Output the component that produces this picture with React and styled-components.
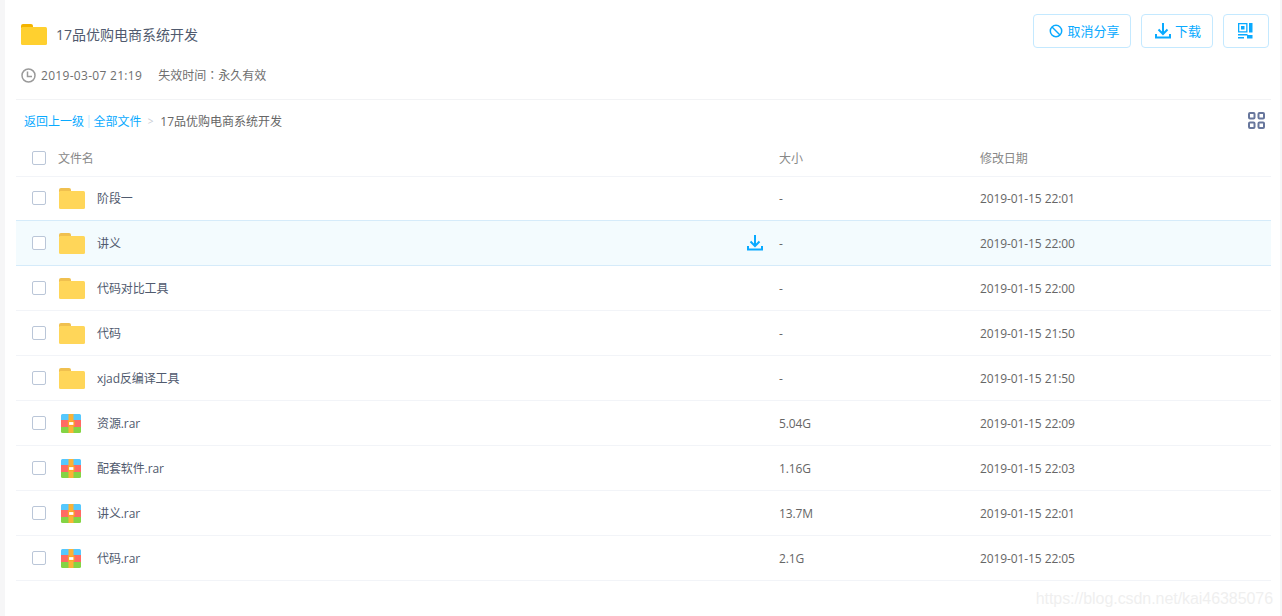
import React from "react";
import styled, { createGlobalStyle } from "styled-components";

const GlobalStyle = createGlobalStyle`
    html, body {
        margin: 0;
        height: 100%;
        background: #f6f6f7;
        overflow: hidden;
    }
    body {
        font-family: "Open Sans", "Noto Sans CJK SC", sans-serif;
        font-size: 12px;
        color: #666;
    }
`

const Page = styled.div`
    position: relative;
    margin: 0 2px 0 5px;
    height: 616px;
    background: #fff;
    padding: 0 9px 0 11px;
    box-sizing: border-box;
`
const Header = styled.header`
    display: flex;
    justify-content: space-between;
    height: 100px;
    border-bottom: 1px solid #f2f3f5;
    padding-top: 14px;
    box-sizing: border-box;
`
const TitleBlock = styled.div`
    padding-left: 5px;
`
const TitleRow = styled.div`
    display: flex;
    align-items: center;
    gap: 9px;
    height: 40px;
`
const Title = styled.h1`
    margin: 0;
    font-size: 14px;
    font-weight: 400;
    color: #505a6e;
`
const MetaRow = styled.div`
    display: flex;
    align-items: center;
    gap: 16px;
    margin-top: 11px;
    height: 20px;
    color: #6f6f6f;
`
const MetaTime = styled.span`
    display: flex;
    align-items: center;
    gap: 5px;
    letter-spacing: 0.3px;
`
const MetaExpiry = styled.span`
    font-family: "Open Sans", "Noto Sans CJK TC", sans-serif;
`
const Actions = styled.div`
    display: flex;
    gap: 10px;
    margin-right: 2px;
`
const ActionButton = styled.button`
    display: flex;
    align-items: center;
    justify-content: center;
    gap: ${props => props.$gap || 5}px;
    width: ${props => props.$width}px;
    height: 34px;
    padding: 0 0 0 ${props => props.$inset || 0}px;
    background: #fff;
    border: 1px solid #c4e9ff;
    border-radius: 4px;
    color: #09aaff;
    font: inherit;
    font-size: 13px;
`
const ButtonLabel = styled.span`
    margin-bottom: 2px;
`
const CrumbBar = styled.nav`
    display: flex;
    align-items: center;
    height: 40px;
    box-sizing: border-box;
    padding: 1px 6px 0 8px;
    color: #666;
`
const CrumbLink = styled.a`
    color: #09aaff;
`
const CrumbDivider = styled.span`
    color: #c4e9ff;
    margin: 0 1.500px;
`
const CrumbArrow = styled.span`
    color: #c8ccd4;
    margin: 0 7px 0 6px;
    font-size: 10px;
`
const GridToggle = styled.span`
    display: flex;
    margin-left: auto;
`
const Row = styled.div`
    display: grid;
    grid-template-columns: 27px 38px 682px 201px 1fr;
    align-items: center;
    height: ${props => props.$head ? "37px" : props.$active ? "46px" : "45px"};
    box-sizing: border-box;
    padding-left: 16px;
    border-bottom: 1px solid ${props => props.$active ? "#d5ebfa" : "#f2f4f8"};
    border-top: ${props => props.$active ? "1px solid #d5ebfa" : "none"};
    background: ${props => props.$active ? "#f3fbfe" : "transparent"};
    color: ${props => props.$head ? "#888" : "#666"};
    letter-spacing: -0.1px;
    margin-top: ${props => props.$active ? "-1px" : "0"};
    margin-bottom: ${props => props.$head ? "-1px" : "0"};
`
const Checkbox = styled.span`
    display: block;
    width: 12px;
    height: 12px;
    background: #fff;
    border: 1px solid #bac6d8;
    border-radius: 2px;
`
const HeadName = styled.span`
    grid-column: 2 / span 2;
    margin-left: -1px;
`
const IconCell = styled.span`
    display: flex;
`
const NameCell = styled.span`
    display: flex;
    align-items: center;
    justify-content: space-between;
    color: #505a6e;
    padding-right: 16px;
`
const Watermark = styled.span`
    position: absolute;
    right: 7px;
    bottom: 8px;
    font-family: "Liberation Sans", sans-serif;
    font-size: 16px;
    letter-spacing: -0.06px;
    color: #efefef;
`

const FolderIcon = ({ tab = "#f0c04f", body = "#ffd659" }) => (
    <svg width="26" height="21" viewBox="0 0 26 21">
        <path d="M0 2a2 2 0 0 1 2-2h8a2 2 0 0 1 2 2v2H0z" fill={tab} />
        <rect x="0" y="3" width="26" height="18" rx="1.500" fill={body} />
    </svg>
)

const RarIcon = () => (
    <svg width="26" height="20" viewBox="0 0 26 20">
        <g transform="translate(2 1)">
            <path d="M1.500 0h17A1.500 1.500 0 0 1 20 1.500V6H0V1.500A1.500 1.500 0 0 1 1.500 0z" fill="#56c8fd" />
            <rect y="6" width="20" height="7" fill="#ff6a63" />
            <path d="M0 13h20v4.500a1.500 1.500 0 0 1-1.500 1.500h-17A1.500 1.500 0 0 1 0 17.500z" fill="#84d444" />
            <rect x="7.500" y="0" width="5" height="19" fill="#fbb236" />
            <rect x="7.500" y="7.500" width="5.500" height="4" fill="#fff" stroke="#fba526" strokeWidth="1.200" />
        </g>
    </svg>
)

const DownloadIcon = ({ size = 16 }) => (
    <svg width={size} height={size} viewBox="0 0 16 16" fill="none" stroke="#09aaff" strokeWidth="2">
        <path d="M8 0v10" />
        <path d="M3.500 6.500 8 11l4.500-4.500" />
        <path d="M1 11v3.500h14V11" />
    </svg>
)

const BanIcon = () => (
    <svg width="14" height="14" viewBox="0 0 14 14" fill="none" stroke="#09aaff" strokeWidth="1.500">
        <circle cx="7" cy="7" r="5.700" />
        <path d="M3 3l8 8" />
    </svg>
)

const QrIcon = () => (
    <svg width="16" height="16" viewBox="0 0 16 16" fill="#09aaff">
        <path d="M0 0h9.500v9.500H0zm1.300 1.300v6.900h6.900V1.300z" fillRule="evenodd" />
        <rect x="3" y="3" width="3.500" height="3.500" />
        <rect x="11" y="0" width="3.500" height="9.500" />
        <rect x="0" y="11" width="9.500" height="1.500" />
        <rect x="0" y="14" width="6" height="1.500" />
        <rect x="9" y="12" width="5.500" height="3.500" />
    </svg>
)

const ClockIcon = () => (
    <svg width="15" height="15" viewBox="0 0 15 15" fill="none" stroke="#9a9a9a" strokeWidth="1.500">
        <circle cx="7.500" cy="7.500" r="6.500" />
        <path d="M6.500 3.500v5h4.500" />
    </svg>
)

const GridIcon = () => (
    <svg width="17" height="17" viewBox="0 0 17 17" fill="none" stroke="#67769c" strokeWidth="2">
        <rect x="1" y="1" width="5.500" height="5.500" rx="1" />
        <rect x="10.500" y="1" width="5.500" height="5.500" rx="1" />
        <rect x="1" y="10.500" width="5.500" height="5.500" rx="1" />
        <rect x="10.500" y="10.500" width="5.500" height="5.500" rx="1" />
    </svg>
)

const files = [
    { name: "阶段一", size: "-", date: "2019-01-15 22:01", type: "folder" },
    { name: "讲义", size: "-", date: "2019-01-15 22:00", type: "folder", active: true },
    { name: "代码对比工具", size: "-", date: "2019-01-15 22:00", type: "folder" },
    { name: "代码", size: "-", date: "2019-01-15 21:50", type: "folder" },
    { name: "xjad反编译工具", size: "-", date: "2019-01-15 21:50", type: "folder" },
    { name: "资源.rar", size: "5.04G", date: "2019-01-15 22:09", type: "rar" },
    { name: "配套软件.rar", size: "1.16G", date: "2019-01-15 22:03", type: "rar" },
    { name: "讲义.rar", size: "13.7M", date: "2019-01-15 22:01", type: "rar" },
    { name: "代码.rar", size: "2.1G", date: "2019-01-15 22:05", type: "rar" },
]

const App = () => (
    <>
        <GlobalStyle />
        <Page>
            <Header>
                <TitleBlock>
                    <TitleRow>
                        <FolderIcon tab="#f4b400" body="#ffd02f" />
                        <Title>17品优购电商系统开发</Title>
                    </TitleRow>
                    <MetaRow>
                        <MetaTime><ClockIcon />2019-03-07 21:19</MetaTime>
                        <MetaExpiry>失效时间：永久有效</MetaExpiry>
                    </MetaRow>
                </TitleBlock>
                <Actions>
                    <ActionButton $width={98} $inset={5} $gap={4}><BanIcon /><ButtonLabel>取消分享</ButtonLabel></ActionButton>
                    <ActionButton $width={72} $inset={2} $gap={4}><DownloadIcon /><ButtonLabel>下载</ButtonLabel></ActionButton>
                    <ActionButton $width={46}><QrIcon /></ActionButton>
                </Actions>
            </Header>
            <CrumbBar>
                <CrumbLink>返回上一级</CrumbLink>
                <CrumbDivider>|</CrumbDivider>
                <CrumbLink>全部文件</CrumbLink>
                <CrumbArrow>&gt;</CrumbArrow>
                <span>17品优购电商系统开发</span>
                <GridToggle><GridIcon /></GridToggle>
            </CrumbBar>
            <Row $head>
                <Checkbox />
                <HeadName>文件名</HeadName>
                <span>大小</span>
                <span>修改日期</span>
            </Row>
            {files.map(file => (
                <Row key={file.name} $active={file.active}>
                    <Checkbox />
                    <IconCell>{file.type === "folder" ? <FolderIcon /> : <RarIcon />}</IconCell>
                    <NameCell>
                        {file.name}
                        {file.active && <DownloadIcon />}
                    </NameCell>
                    <span>{file.size}</span>
                    <span>{file.date}</span>
                </Row>
            ))}
            <Watermark>https://blog.csdn.net/kai46385076</Watermark>
        </Page>
    </>
)

export default App
